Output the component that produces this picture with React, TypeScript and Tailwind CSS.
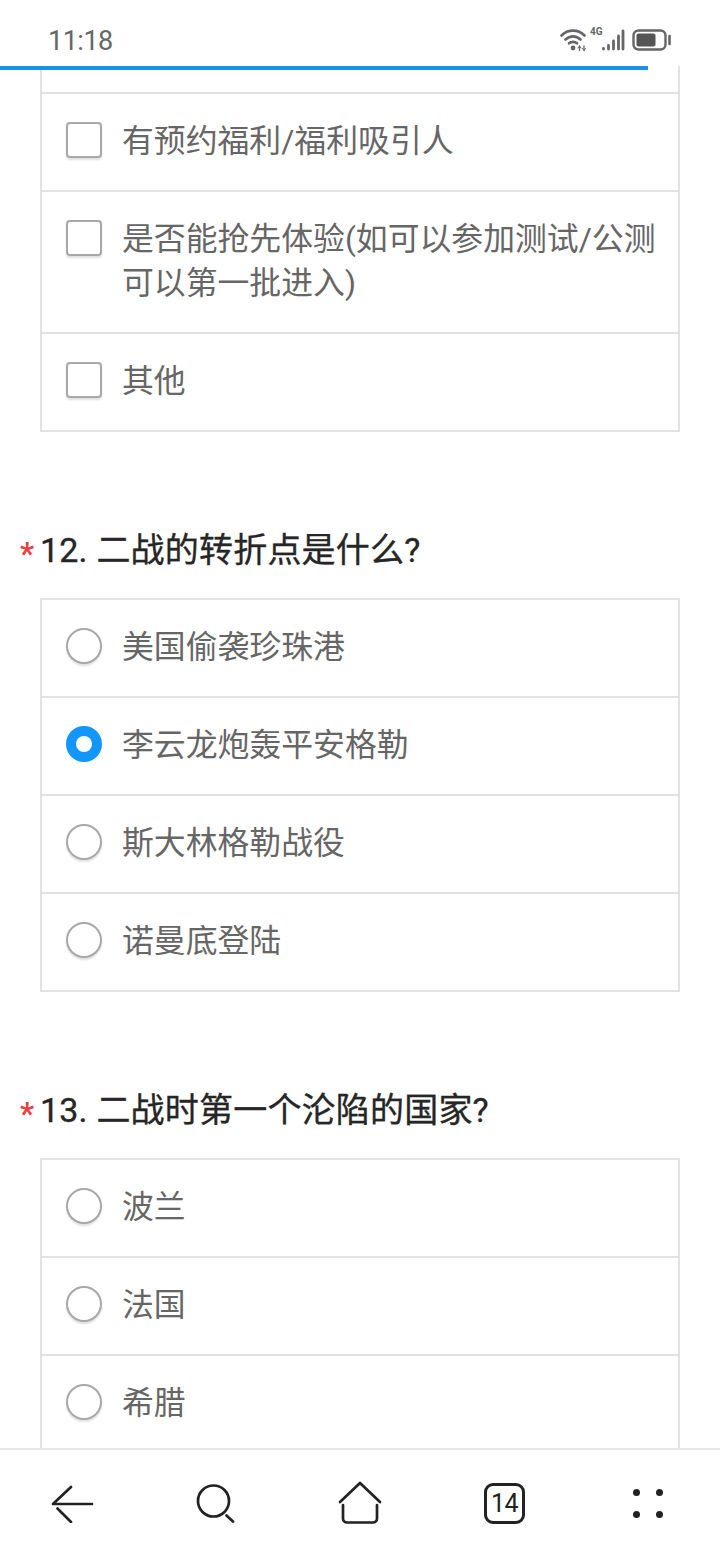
import React from "react";

const FONT = "font-['Roboto','Noto_Sans_CJK_SC',sans-serif]";

function Box({ kind, on }: { kind: "check" | "radio"; on?: boolean }) {
  if (kind === "check") {
    return (
      <span className="mt-[3px] h-[36px] w-[36px] shrink-0 rounded-[4px] border-2 border-[#a8a8a8] bg-white shadow-[0_2px_2px_rgba(0,0,0,0.12)]" />
    );
  }
  if (on) {
    return (
      <span className="mt-[3px] flex h-[36px] w-[36px] shrink-0 items-center justify-center rounded-full bg-[#1296fb]">
        <span className="h-[16px] w-[16px] rounded-full bg-white" />
      </span>
    );
  }
  return (
    <span className="mt-[3px] h-[36px] w-[36px] shrink-0 rounded-full border-2 border-[#a8a8a8] bg-white shadow-[0_2px_2px_rgba(0,0,0,0.12)]" />
  );
}

function Row({ text, kind, on, last }: { text: React.ReactNode; kind: "check" | "radio"; on?: boolean; last?: boolean }) {
  return (
    <div className={`flex gap-[20px] pl-[24px] pr-[10px] pt-[25px] pb-[27px] ${last ? "" : "border-b-2 border-[#e2e2e2]"}`}>
      <Box kind={kind} on={on} />
      <div className="text-[31.85px] leading-[44px] text-[#666666]">{text}</div>
    </div>
  );
}

function Title({ text }: { text: string }) {
  return (
    <div className="mt-[94px] mb-[24px] flex pl-[20px] text-[34px] leading-[48px] text-[#262626]">
      <span className="mt-[10px] h-[36px] w-[20px] text-[31px] font-bold leading-[36px] text-[#e9413e]">*</span>
      <span className="tracking-[0.2px] [-webkit-text-stroke:0.35px_#262626]">{text}</span>
    </div>
  );
}

function Card({ children, open }: { children: React.ReactNode; open?: boolean }) {
  return <div className={`mx-[40px] border-2 border-[#e2e2e2] ${open ? "border-t-0" : ""}`}>{children}</div>;
}

function StatusIcons() {
  return (
    <div className="flex items-center">
      <svg width="72" height="24" viewBox="0 0 72 24" fill="none" stroke="#666666" strokeLinecap="round">
        <path d="M1.5 7.500C8 1 18 1 24.500 7.500" strokeWidth="2.6" />
        <path d="M5.500 11.500C10 7.300 16 7.300 20.500 11.500" strokeWidth="2.6" />
        <path d="M9 15.300C11.200 13.400 14.800 13.400 17 15.300" strokeWidth="2.6" />
        <circle cx="13" cy="20" r="2.4" fill="#666666" stroke="none" />
        <path d="M19.500 18v4.500M24 18v4.500" strokeWidth="1.3" />
        <path d="M18 20l1.500-2 1.500 2M22.500 20.500l1.500 2 1.500-2" strokeWidth="1" />
        <path d="M43.500 20.500v.5M48.500 17.500v3.500M53.500 13v8M58.500 8v13M63 3v18" strokeWidth="2.8" />
      </svg>
      <svg width="40" height="24" viewBox="0 0 40 24" fill="none">
        <rect x="1.500" y="2.500" width="32" height="19" rx="5" stroke="#666666" strokeWidth="2.4" />
        <rect x="4.500" y="5.500" width="19" height="13" rx="2" fill="#555555" />
        <path d="M37.500 8v8" stroke="#666666" strokeWidth="2.6" strokeLinecap="round" />
      </svg>
    </div>
  );
}

function BottomBar() {
  return (
    <div className="relative z-10 flex h-[112px] shrink-0 items-center gap-[102px] border-t-2 border-[#e6e6e6] bg-white pl-[50px] pb-[4px]">
      <svg width="44" height="40" viewBox="0 0 44 40" fill="none" stroke="#222222" strokeWidth="2.7" strokeLinecap="round">
        <path d="M3 21H42M21 4L3.500 20.500M7.500 25.500L21 39" />
      </svg>
      <svg width="40" height="40" viewBox="0 0 40 40" fill="none" stroke="#222222" strokeWidth="2.7" strokeLinecap="round">
        <circle cx="17.500" cy="18" r="15.500" />
        <path d="M30.500 32.500l6.500 6" />
      </svg>
      <svg width="44" height="44" viewBox="0 0 44 44" fill="none" stroke="#222222" strokeWidth="2.7" strokeLinecap="round" strokeLinejoin="round">
        <path d="M2 21L22 2L42 21" />
        <path d="M5 24v13.500a4 4 0 0 0 4 4h26a4 4 0 0 0 4-4V24" />
      </svg>
      <div className="flex h-[41px] w-[41px] items-center justify-center rounded-[9px] border-[3px] border-[#222222] text-[25px] leading-none tracking-[-0.5px] text-[#222222]">
        14
      </div>
      <div className="ml-[6px] grid grid-cols-2 gap-x-[16px] gap-y-[15px]">
        <span className="h-[7px] w-[7px] rounded-full bg-[#222222]" />
        <span className="h-[7px] w-[7px] rounded-full bg-[#222222]" />
        <span className="h-[7px] w-[7px] rounded-full bg-[#222222]" />
        <span className="h-[7px] w-[7px] rounded-full bg-[#222222]" />
      </div>
    </div>
  );
}

export default function App() {
  return (
    <div className={`flex h-[1560px] w-[720px] flex-col overflow-hidden bg-white ${FONT}`}>
      <header className="flex h-[66px] shrink-0 items-center justify-between pl-[48px] pr-[48px] pt-[14px] text-[27px] tracking-[-0.5px] text-[#666666]">
        <span className="mt-[2px]">11:18</span>
        <div className="relative">
          <StatusIcons />
          <span className="absolute left-[30px] top-[-2px] text-[10px] font-bold leading-[12px] tracking-normal text-[#666666]">4G</span>
        </div>
      </header>
      <main className="relative min-h-0 flex-1 overflow-hidden">
        <div className="absolute left-0 top-0 z-10 h-[4px] w-[648px] bg-[#1890e8]" />
        <Card open>
          <div className="h-[28px] border-b-2 border-[#e2e2e2]" />
          <Row kind="check" text="有预约福利/福利吸引人" />
          <Row kind="check" text="是否能抢先体验(如可以参加测试/公测可以第一批进入)" />
          <Row kind="check" text="其他" last />
        </Card>
        <Title text="12. 二战的转折点是什么?" />
        <Card>
          <Row kind="radio" text="美国偷袭珍珠港" />
          <Row kind="radio" on text="李云龙炮轰平安格勒" />
          <Row kind="radio" text="斯大林格勒战役" />
          <Row kind="radio" text="诺曼底登陆" last />
        </Card>
        <Title text="13. 二战时第一个沦陷的国家?" />
        <Card>
          <Row kind="radio" text="波兰" />
          <Row kind="radio" text="法国" />
          <Row kind="radio" text="希腊" />
        </Card>
      </main>
      <BottomBar />
    </div>
  );
}
